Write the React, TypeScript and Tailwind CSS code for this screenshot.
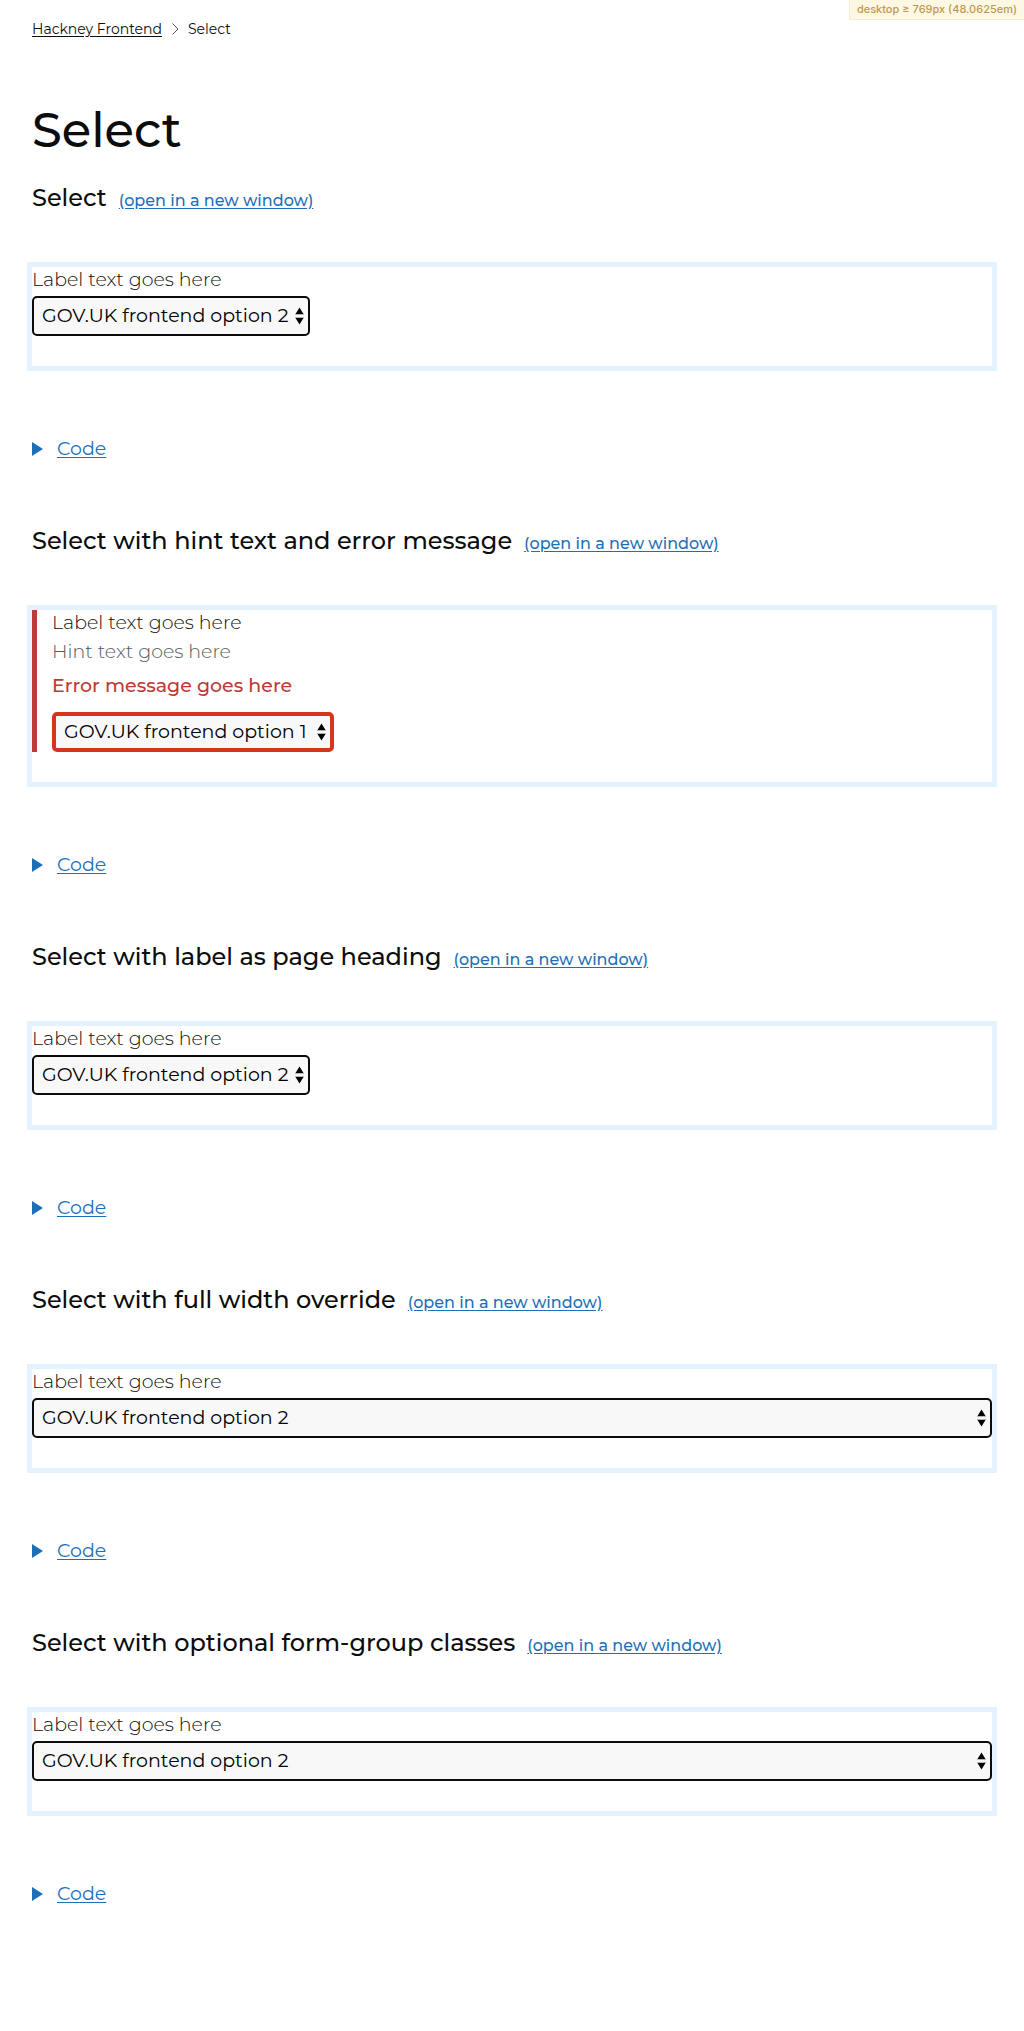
import { useId } from "react";

type Example = {
  title: string;
  selected: string;
  hint?: string;
  error?: string;
  fullWidth?: boolean;
};

const options = [
  "GOV.UK frontend option 1",
  "GOV.UK frontend option 2",
  "GOV.UK frontend option 3",
];

const examples: Example[] = [
  { title: "Select", selected: options[1] },
  {
    title: "Select with hint text and error message",
    selected: options[0],
    hint: "Hint text goes here",
    error: "Error message goes here",
  },
  { title: "Select with label as page heading", selected: options[1] },
  { title: "Select with full width override", selected: options[1], fullWidth: true },
  { title: "Select with optional form-group classes", selected: options[1], fullWidth: true },
];

function SelectField({ example }: { example: Example }) {
  const id = useId();
  const { error, hint, fullWidth, selected } = example;
  return (
    <div className={error ? "mb-[30px] border-l-5 border-[#be3a34] pl-[15px]" : "mb-[30px]"}>
      <label htmlFor={id} className="mb-1 block text-[19px] leading-[25px] font-light text-[#0b0c0c]">
        Label text goes here
      </label>
      {hint && (
        <p className="mb-[9px] text-[19px] leading-[25px] font-light text-[#525a5b]">{hint}</p>
      )}
      {error && (
        <p className="mb-[14px] text-[19px] leading-[25px] font-medium text-[#be3a34]">{error}</p>
      )}
      <div className={fullWidth ? "relative w-full" : error ? "relative w-[282px]" : "relative w-[278px]"}>
        <select
          id={id}
          defaultValue={selected}
          className={
            error
              ? "block h-10 w-full appearance-none rounded-[5px] border-4 border-[#d4351c] bg-[#f8f8f8] pl-2 text-[19px] text-black"
              : "block h-10 w-full appearance-none rounded-[5px] border-2 border-[#0b0c0c] bg-[#f8f8f8] pl-2 text-[19px] text-black"
          }
        >
          {options.map((option) => (
            <option key={option}>{option}</option>
          ))}
        </select>
        <svg
          aria-hidden="true"
          viewBox="0 0 9 18"
          className={
            error
              ? "pointer-events-none absolute top-[11px] right-2 h-[18px] w-[9px]"
              : "pointer-events-none absolute top-[11px] right-1.5 h-[18px] w-[9px]"
          }
        >
          <path d="M4.5 0.5L8.5 7h-8zM0.5 11h8L4.5 17.5z" fill="#000" />
          <path d="M0 7.5h9M0 10.5h9" stroke="#b5b5b5" />
        </svg>
      </div>
    </div>
  );
}

function Section({ example }: { example: Example }) {
  return (
    <section className="mb-[65px]">
      <h2 className="mb-[54px] flex flex-wrap items-baseline gap-x-3 text-[24px] leading-[30px] font-medium">
        {example.title}
        <a href="#" className="text-[16px] leading-5 text-[#1d70b8] underline underline-offset-2">
          (open in a new window)
        </a>
      </h2>
      <div className="flow-root outline-5 outline-[#e4f1ff] outline-solid">
        <SelectField example={example} />
      </div>
      <details className="group mt-[70px]">
        <summary className="flex w-fit cursor-pointer list-none items-center gap-[14px] text-[19px] leading-[25px] text-[#1d70b8]">
          <svg aria-hidden="true" viewBox="0 0 11 14" className="h-[14px] w-[11px] group-open:rotate-90">
            <path d="M0 0l11 7-11 7z" fill="currentColor" />
          </svg>
          <span className="underline underline-offset-2">Code</span>
        </summary>
      </details>
    </section>
  );
}

export default function App() {
  return (
    <div className="relative min-h-screen bg-white px-8 pb-15 font-['Montserrat','Inter',sans-serif] text-[#0b0c0c]">
      <div className="absolute top-0 right-0 border-b border-l border-[#faebcc] bg-[#fcf8e3] px-[7px] font-['Inter',sans-serif] text-[11px] leading-[19px] font-medium text-[#c09853]">
        desktop ≥ 769px (48.0625em)
      </div>
      <nav aria-label="Breadcrumb" className="pt-5">
        <ol className="flex items-center text-[14px] leading-[18px]">
          <li>
            <a href="#" className="underline underline-offset-2">
              Hackney Frontend
            </a>
          </li>
          <li className="flex items-center">
            <svg aria-hidden="true" viewBox="0 0 7 12" className="mr-[9px] ml-[10px] h-3 w-[7px]">
              <path d="M0.5 0.5L6 6l-5.5 5.5" fill="none" stroke="#505a5f" />
            </svg>
            Select
          </li>
        </ol>
      </nav>
      <main>
        <h1 className="mt-[67px] mb-[28px] text-[48px] leading-[50px] font-medium">Select</h1>
        {examples.map((example) => (
          <Section key={example.title} example={example} />
        ))}
      </main>
    </div>
  );
}
